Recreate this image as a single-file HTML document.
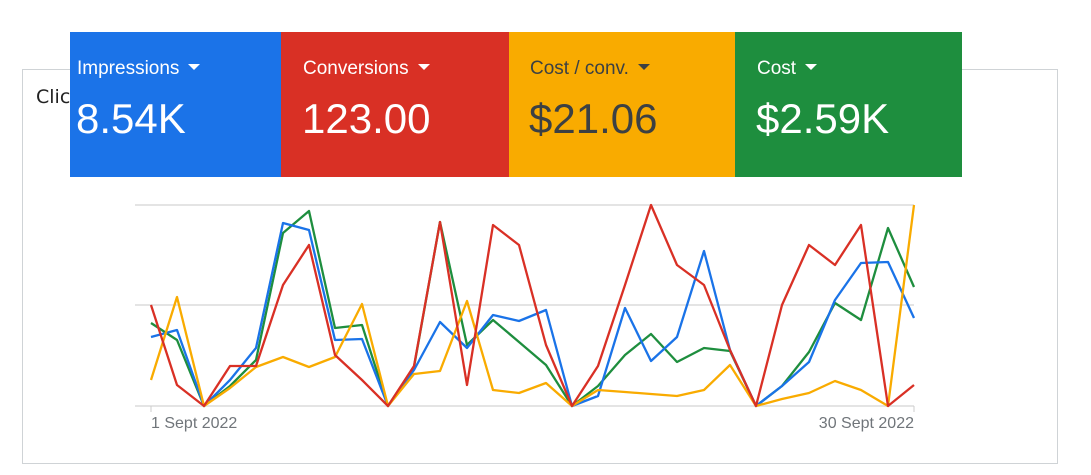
<!DOCTYPE html>
<html><head><meta charset="utf-8"><style>
body{margin:0;width:1091px;height:475px;background:#fff;position:relative;overflow:hidden;font-family:"Liberation Sans",Arial,sans-serif}
.box{position:absolute;left:22px;top:69px;width:1034px;height:393px;border:1px solid #cfd3d6}
.click{position:absolute;left:36px;top:86px;font-size:19px;color:#222;font-family:"DejaVu Sans",sans-serif}
.card{position:absolute;top:32px;height:145px}
.lab{position:absolute;top:58px;font-size:19px;color:#fff;white-space:nowrap}
.val{position:absolute;top:95px;font-size:42px;color:#fff;white-space:nowrap}
.tri{display:inline-block;width:0;height:0;border-left:6px solid transparent;border-right:6px solid transparent;border-top:6px solid currentColor;vertical-align:middle;margin-left:9px;margin-top:-3px}
.ax{position:absolute;top:415px;font-size:16px;color:#70757a}
</style></head><body>
<div class="box"></div>
<div class="click">Clicks</div>
<div class="card" style="left:70px;width:211px;background:#1b73e8"></div>
<div class="card" style="left:281px;width:228px;background:#d93025"></div>
<div class="card" style="left:509px;width:226px;background:#f9ab00"></div>
<div class="card" style="left:735px;width:227px;background:#1e8e3e"></div>
<div class="lab" style="left:77px">Impressions<span class="tri"></span></div>
<div class="val" style="left:76px">8.54K</div>
<div class="lab" style="left:303px">Conversions<span class="tri"></span></div>
<div class="val" style="left:302px">123.00</div>
<div class="lab" style="left:530px;color:#3c4043">Cost / conv.<span class="tri"></span></div>
<div class="val" style="left:529px;color:#3c4043">$21.06</div>
<div class="lab" style="left:757px">Cost<span class="tri"></span></div>
<div class="val" style="left:756px">$2.59K</div>
<svg style="position:absolute;left:0;top:0" width="1091" height="475">
<g stroke="#e4e4e4" stroke-width="2"><line x1="135" y1="205" x2="914" y2="205"/><line x1="135" y1="305" x2="914" y2="305"/><line x1="135" y1="406" x2="914" y2="406"/></g>
<line x1="151" y1="406" x2="151" y2="412" stroke="#ccc"/><line x1="914" y1="406" x2="914" y2="412" stroke="#ccc"/>
<g fill="none" stroke-width="2.3" stroke-linejoin="round">
<polyline stroke="#1e8e3e" points="151,323 177,340 204,406 230,386 256,360 283,233 309,211 335,328 362,325 388,406 414,367 440,222 467,345 493,320 519,342 546,365 572,406 598,386 625,355 651,334 677,362 704,348 730,351 756,406 782,386 809,352 835,303 861,320 888,228 914,287"/>
<polyline stroke="#1a73e8" points="151,337 177,330 204,406 230,380 256,348 283,223 309,230 335,340 362,339 388,406 414,370 440,322 467,348 493,315 519,321 546,310 572,406 598,396 625,308 651,361 677,337 704,251 730,350 756,406 782,386 809,362 835,300 861,263 888,262 914,318"/>
<polyline stroke="#f9ab00" points="151,380 177,297 204,406 230,388 256,367 283,357 309,367 335,357 362,304 388,406 414,374 440,371 467,301 493,390 519,393 546,383 572,406 598,390 625,392 651,394 677,396 704,390 730,365 756,406 782,399 809,393 835,381 861,390 888,406 914,205"/>
<polyline stroke="#d93025" points="151,305 177,385 204,406 230,366 256,366 283,285 309,245 335,355 362,380 388,406 414,366 440,222 467,385 493,225 519,245 546,345 572,406 598,366 625,285 651,205 677,265 704,285 730,350 756,406 782,305 809,245 835,265 861,225 888,406 914,385"/>
</g></svg>
<div class="ax" style="left:151px">1 Sept 2022</div>
<div class="ax" style="right:177px">30 Sept 2022</div>
</body></html>
